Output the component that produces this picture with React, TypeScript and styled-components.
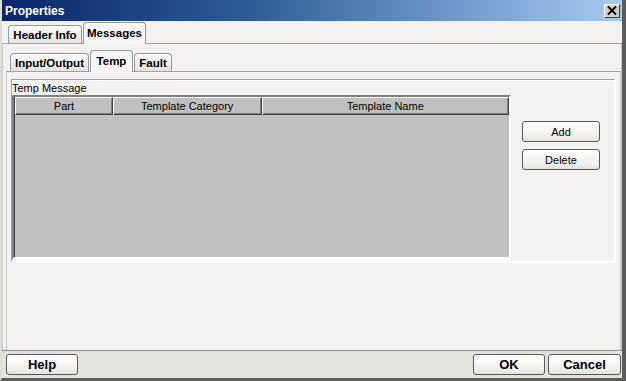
import React from 'react'
import styled, { createGlobalStyle, css } from 'styled-components';

const GlobalStyle = createGlobalStyle`
    html, body {
        margin: 0;
        padding: 0;
        background: #f2f1ef;
    }
    * {
        box-sizing: border-box;
    }
`;

const Window = styled.div`
    width: 626px;
    height: 381px;
    display: flex;
    flex-direction: column;
    background-color: #f2f1ef;
    border-left: 2px solid #dedcd7;
    border-right: 4px solid #5c5c5c;
    border-bottom: 3px solid #5c5c5c;
    font-family: "Liberation Sans", Arial, sans-serif;
    overflow: hidden;
`;

const TitleBar = styled.div`
    height: 21px;
    flex-shrink: 0;
    margin-left: -2px;
    display: flex;
    align-items: center;
    justify-content: space-between;
    padding: 0 2px 0 5px;
    background: linear-gradient(to right, #0a246a 0%, #2f5c98 40%, #a6caf0 100%);
`;

const Title = styled.span`
    color: #fff;
    font-weight: 700;
    font-size: 12px;
`;

const CloseButton = styled.div`
    width: 16px;
    height: 14px;
    background-color: #d4d0c8;
    border: 1px solid;
    border-color: #fff #404040 #404040 #fff;
    display: flex;
    align-items: center;
    justify-content: center;
`;

const Body = styled.div`
    flex: 1;
    display: flex;
    flex-direction: column;
    padding-top: 1px;
`;

const TabStrip = styled.div<{ $left: number }>`
    display: flex;
    align-items: flex-end;
    gap: 1px;
    padding-left: ${p => p.$left}px;
    position: relative;
    z-index: 1;
`;

const Tab = styled.div<{ $active?: boolean; $width: number }>`
    width: ${p => p.$width}px;
    height: 18px;
    border: 1px solid #919b9c;
    border-bottom: none;
    border-radius: 4px 4px 0 0;
    background: linear-gradient(#fbfbfa, #e3e2de);
    font-size: 11.5px;
    font-weight: 700;
    color: #000;
    display: flex;
    align-items: center;
    justify-content: center;
    padding-top: 1px;
    ${p => p.$active && css`
        height: 22px;
        margin-bottom: -1px;
        background: #f7f6f4;
        padding-bottom: 2px;
    `}
`;

const Panel = styled.div<{ $inset?: boolean }>`
    flex: 1;
    display: flex;
    flex-direction: column;
    border-top: 1px solid #a3a3a1;
    border-left: 1px solid #c9c8c4;
    border-right: 1px solid #c9c8c4;
    ${p => p.$inset && css`
        margin-left: 3px;
        margin-right: 0;
    `}
`;

const PanelInner = styled.div`
    flex: 1;
    display: flex;
    flex-direction: column;
    padding-top: 6px;
`;

const GroupArea = styled.div`
    padding: 7px 5px 0 4px;
`;

const GroupBox = styled.div`
    height: 183px;
    border: 1px solid;
    border-color: #a0a0a0 #ffffff #ffffff #a0a0a0;
    box-shadow: 1px 1px 0 #ffffff, inset 1px 1px 0 #ffffff;
    display: flex;
    flex-direction: column;
    padding: 2px 0 1px 0;
`;

const GroupLabel = styled.div`
    font-size: 11px;
    color: #000;
    height: 13px;
    line-height: 12px;
`;

const GroupContent = styled.div`
    flex: 1;
    display: flex;
`;

const Table = styled.div`
    width: 499px;
    height: 100%;
    display: flex;
    flex-direction: column;
    background-color: #c0c0c0;
    border-top: 2px solid #808080;
    border-left: 2px solid #808080;
    border-right: 2px solid #ffffff;
    border-bottom: 3px solid #ffffff;
    box-shadow: inset 1px 0 0 #404040;
`;

const HeaderRow = styled.div`
    display: flex;
    height: 18px;
    padding-left: 1px;
`;

const HeaderCell = styled.div<{ $width: number }>`
    width: ${p => p.$width}px;
    height: 18px;
    border: 1px solid;
    border-color: #ffffff #404040 #404040 #ffffff;
    box-shadow: inset -1px -1px 0 #808080;
    font-size: 11px;
    color: #000;
    display: flex;
    align-items: center;
    justify-content: center;
`;

const Side = styled.div`
    flex: 1;
    display: flex;
    flex-direction: column;
    align-items: center;
    gap: 7px;
    padding-top: 26px;
    padding-right: 3px;
`;

const Button = styled.button<{ $width: number; $bold?: boolean }>`
    width: ${p => p.$width}px;
    height: 21px;
    padding: 0;
    border: 1px solid #5a5a5a;
    border-radius: 3px;
    background: linear-gradient(#ffffff, #f1f0ec 70%, #e4e2dc);
    font-family: "Liberation Sans", Arial, sans-serif;
    font-size: 11px;
    color: #000;
    ${p => p.$bold && css`
        font-size: 13px;
        font-weight: 700;
    `}
`;

const Footer = styled.div`
    height: 28px;
    flex-shrink: 0;
    background-color: #e3e1dc;
    border-top: 1px solid #8f8f8f;
    display: flex;
    align-items: center;
    justify-content: space-between;
    padding: 0 1px 0 4px;
`;

const FooterGroup = styled.div`
    display: flex;
    gap: 3px;
`;

const App = () => {
    return (
        <>
            <GlobalStyle />
            <Window>
                <TitleBar>
                    <Title>Properties</Title>
                    <CloseButton>
                        <svg width="10" height="9" viewBox="0 0 10 9">
                            <path d="M1 0.5 L9 8.5 M9 0.5 L1 8.5" stroke="#000" strokeWidth="2" />
                        </svg>
                    </CloseButton>
                </TitleBar>
                <Body>
                    <TabStrip $left={6}>
                        <Tab $width={74}>Header Info</Tab>
                        <Tab $width={63} $active>Messages</Tab>
                    </TabStrip>
                    <Panel>
                        <PanelInner>
                            <TabStrip $left={7}>
                                <Tab $width={79}>Input/Output</Tab>
                                <Tab $width={43} $active>Temp</Tab>
                                <Tab $width={38}>Fault</Tab>
                            </TabStrip>
                            <Panel $inset>
                                <GroupArea>
                                    <GroupBox>
                                        <GroupLabel>Temp Message</GroupLabel>
                                        <GroupContent>
                                            <Table>
                                                <HeaderRow>
                                                    <HeaderCell $width={98}>Part</HeaderCell>
                                                    <HeaderCell $width={149}>Template Category</HeaderCell>
                                                    <HeaderCell $width={248}>Template Name</HeaderCell>
                                                </HeaderRow>
                                            </Table>
                                            <Side>
                                                <Button $width={78}>Add</Button>
                                                <Button $width={78}>Delete</Button>
                                            </Side>
                                        </GroupContent>
                                    </GroupBox>
                                </GroupArea>
                            </Panel>
                        </PanelInner>
                    </Panel>
                </Body>
                <Footer>
                    <Button $width={72} $bold>Help</Button>
                    <FooterGroup>
                        <Button $width={72} $bold>OK</Button>
                        <Button $width={73} $bold>Cancel</Button>
                    </FooterGroup>
                </Footer>
            </Window>
        </>
    )
}

export default App;
